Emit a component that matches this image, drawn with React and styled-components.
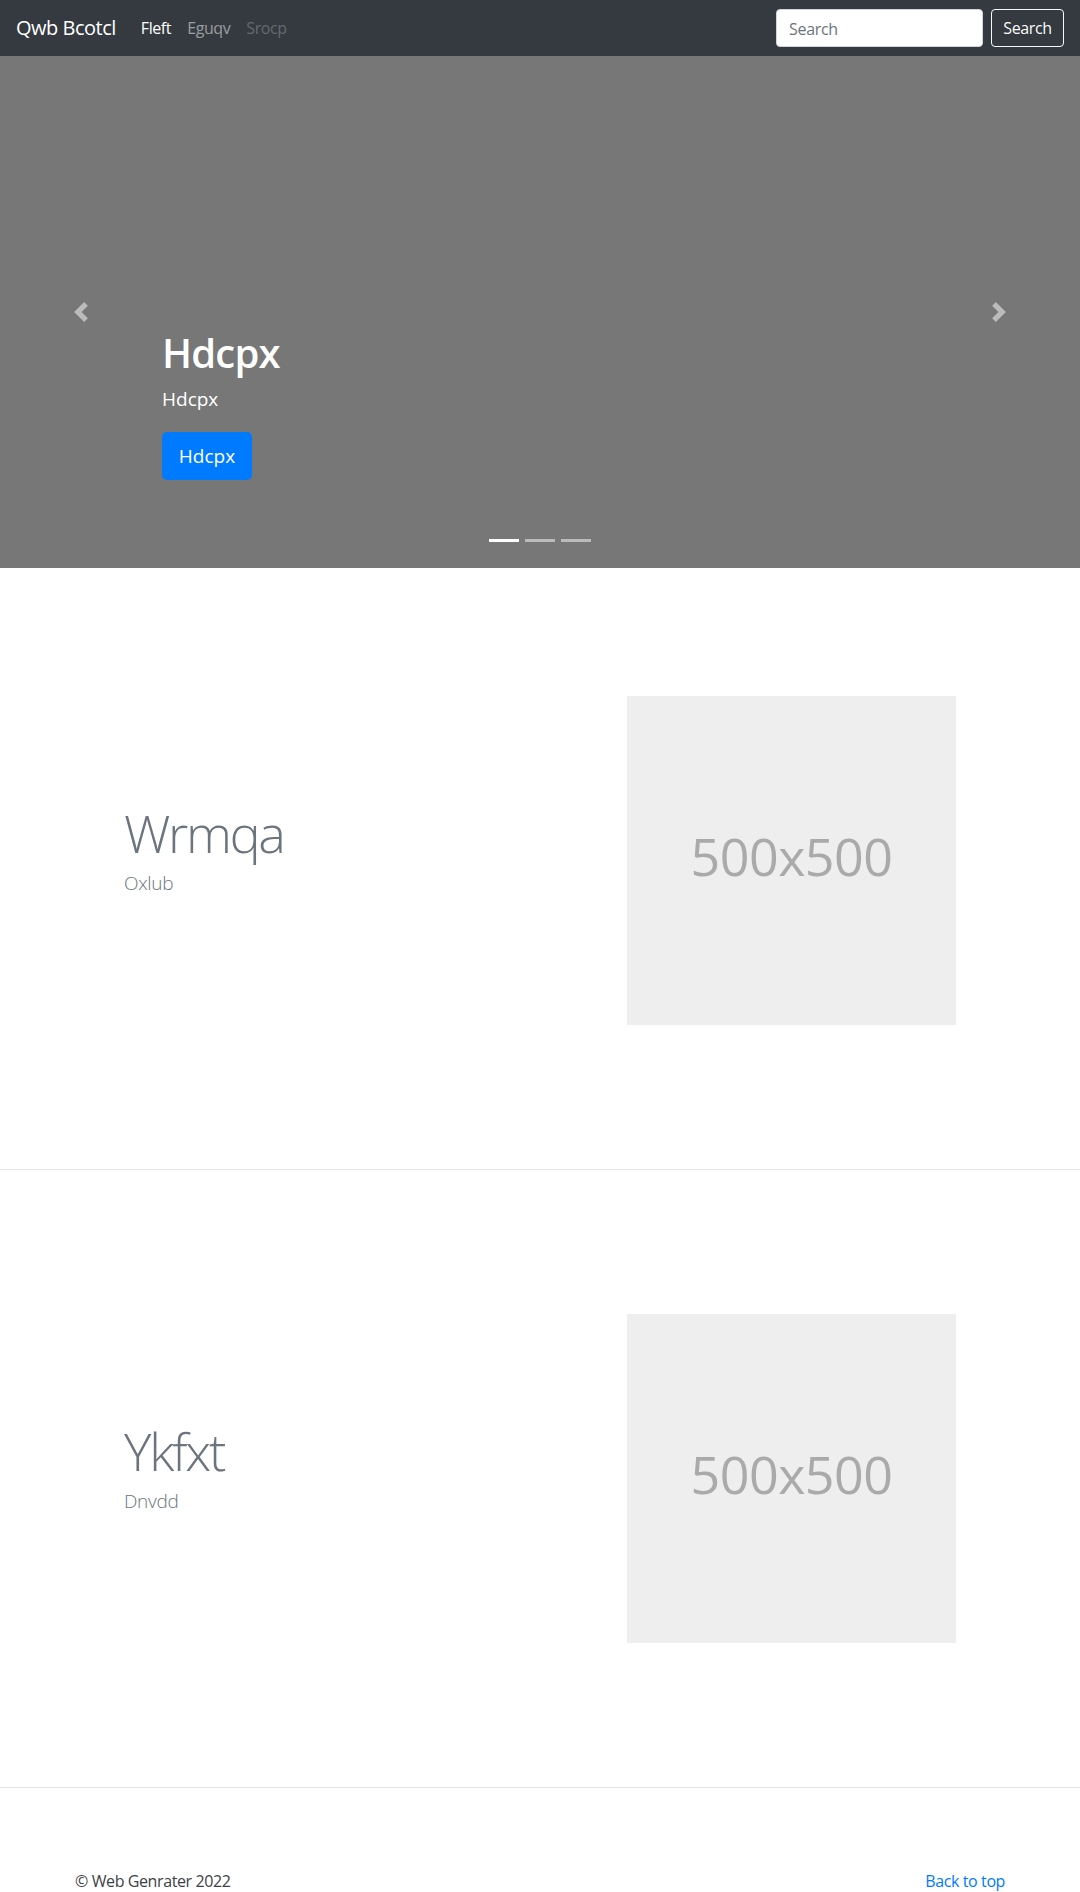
import React from "react";
import styled, { createGlobalStyle } from "styled-components";

const GlobalStyle = createGlobalStyle`
  * { box-sizing: border-box; }
  html, body { margin: 0; padding: 0; }
  body {
    font-family: "Open Sans", "Noto Sans", sans-serif;
    font-size: 16px;
    line-height: 1.5;
    color: #212529;
    background: #fff;
  }
`;

const Navbar = styled.nav`
  height: 56px;
  background: #343a40;
  display: flex;
  align-items: center;
  padding: 0 16px;
`;

const Brand = styled.a`
  font-size: 20px;
  line-height: 30px;
  color: #fff;
  text-decoration: none;
  margin-right: 17px;
  letter-spacing: -0.5px;
`;

const NavList = styled.div`
  display: flex;
  flex: 1;
`;

const NavLink = styled.a`
  padding: 8px 8px;
  font-size: 16px;
  letter-spacing: -0.4px;
  text-decoration: none;
  color: ${(p) =>
    p.$state === "active"
      ? "#fff"
      : p.$state === "disabled"
      ? "rgba(255,255,255,0.25)"
      : "rgba(255,255,255,0.5)"};
`;

const SearchForm = styled.form`
  display: flex;
  gap: 8px;
  margin: 0;
`;

const SearchInput = styled.input`
  width: 207px;
  height: 38px;
  padding: 7px 12px 5px;
  font-family: inherit;
  font-size: 16px;
  color: #495057;
  background: #fff;
  border: 1px solid #ced4da;
  border-radius: 4px;
  outline: none;
  &::placeholder { color: #6c757d; letter-spacing: -0.3px; }
`;

const OutlineButton = styled.button`
  width: 73px;
  height: 38px;
  padding: 0;
  font-family: inherit;
  font-size: 16px;
  letter-spacing: -0.4px;
  color: #f8f9fa;
  background: transparent;
  border: 1px solid #f8f9fa;
  border-radius: 4px;
`;

const Hero = styled.section`
  position: relative;
  height: 512px;
  background: #777;
  display: flex;
  flex-direction: column;
  justify-content: flex-end;
  padding: 0 15% 88px;
  color: #fff;
`;

const HeroTitle = styled.h1`
  margin: 0 0 7px;
  font-size: 40px;
  line-height: 48px;
  font-weight: 600;
  letter-spacing: -0.8px;
`;

const HeroText = styled.p`
  margin: 0 0 18px;
  font-size: 19px;
  line-height: 30px;
  font-weight: 500;
`;

const PrimaryButton = styled.a`
  align-self: flex-start;
  display: inline-flex;
  align-items: center;
  justify-content: center;
  width: 90px;
  height: 48px;
  font-size: 19px;
  color: #fff;
  background: #007bff;
  border-radius: 5px;
  text-decoration: none;
`;

const Control = styled.span`
  position: absolute;
  top: 0;
  bottom: 0;
  ${(p) => (p.$side === "left" ? "left: 0;" : "right: 0;")}
  width: 15%;
  display: flex;
  align-items: center;
  justify-content: center;
  opacity: 0.5;
`;

const Indicators = styled.div`
  position: absolute;
  left: 0;
  right: 0;
  top: 483px;
  display: flex;
  justify-content: center;
  gap: 6px;
`;

const Indicator = styled.span`
  width: 30px;
  height: 3px;
  background: #fff;
  opacity: ${(p) => (p.$active ? 1 : 0.5)};
`;

const Featurette = styled.section`
  display: flex;
  align-items: center;
  padding: ${(p) => (p.$first ? "128px" : "144px")} 124px 144px;
`;

const FeatureText = styled.div`
  flex: 1;
  padding-bottom: 22px;
`;

const FeatureHeading = styled.h2`
  margin: 0 0 3px;
  font-size: 52px;
  line-height: 64px;
  font-weight: 300;
  color: #6c757d;
  letter-spacing: -2.3px;
`;

const Lead = styled.p`
  margin: 0;
  font-size: 19px;
  line-height: 30px;
  font-weight: 300;
  color: #6c757d;
  letter-spacing: -0.3px;
`;

const Placeholder = styled.div`
  width: 329px;
  height: 329px;
  background: #eee;
  color: #aaa;
  display: flex;
  align-items: center;
  justify-content: center;
  font-size: 52px;
  padding-bottom: 9px;
  letter-spacing: -0.5px;
`;

const Divider = styled.hr`
  margin: 0;
  border: 0;
  border-top: 1px solid rgba(0, 0, 0, 0.1);
`;

const Footer = styled.footer`
  width: 930px;
  margin: 0 auto;
  padding-top: 81px;
  display: flex;
  justify-content: space-between;
  font-size: 16px;
  letter-spacing: -0.4px;
`;

const FooterText = styled.p`
  margin: 0 0 16px;
  color: #3d4246;
`;

const FooterLink = styled.a`
  color: #007bff;
  text-decoration: none;
`;

const Chevron = ({ dir }) => (
  <svg width="20" height="20" viewBox="0 0 8 8" fill="#fff">
    {dir === "left" ? (
      <path d="M5.25 0l-4 4 4 4 1.5-1.5L4.25 4l2.5-2.5L5.25 0z" />
    ) : (
      <path d="M2.75 0l-1.5 1.5L3.75 4l-2.5 2.5L2.75 8l4-4-4-4z" />
    )}
  </svg>
);

const features = [
  { title: "Wrmqa", lead: "Oxlub" },
  { title: "Ykfxt", lead: "Dnvdd" },
];

export default function App() {
  return (
    <>
      <GlobalStyle />
      <Navbar>
        <Brand href="#">Qwb Bcotcl</Brand>
        <NavList>
          <NavLink href="#" $state="active">Fleft</NavLink>
          <NavLink href="#">Eguqv</NavLink>
          <NavLink href="#" $state="disabled">Srocp</NavLink>
        </NavList>
        <SearchForm onSubmit={(e) => e.preventDefault()}>
          <SearchInput type="text" placeholder="Search" />
          <OutlineButton type="submit">Search</OutlineButton>
        </SearchForm>
      </Navbar>

      <Hero>
        <HeroTitle>Hdcpx</HeroTitle>
        <HeroText>Hdcpx</HeroText>
        <PrimaryButton href="#">Hdcpx</PrimaryButton>
        <Control $side="left"><Chevron dir="left" /></Control>
        <Control $side="right"><Chevron dir="right" /></Control>
        <Indicators>
          <Indicator $active />
          <Indicator />
          <Indicator />
        </Indicators>
      </Hero>

      {features.map((f, i) => (
        <React.Fragment key={f.title}>
          <Featurette $first={i === 0}>
            <FeatureText>
              <FeatureHeading>{f.title}</FeatureHeading>
              <Lead>{f.lead}</Lead>
            </FeatureText>
            <Placeholder>500x500</Placeholder>
          </Featurette>
          <Divider />
        </React.Fragment>
      ))}

      <Footer>
        <FooterText>© Web Genrater 2022</FooterText>
        <FooterLink href="#">Back to top</FooterLink>
      </Footer>
    </>
  );
}
